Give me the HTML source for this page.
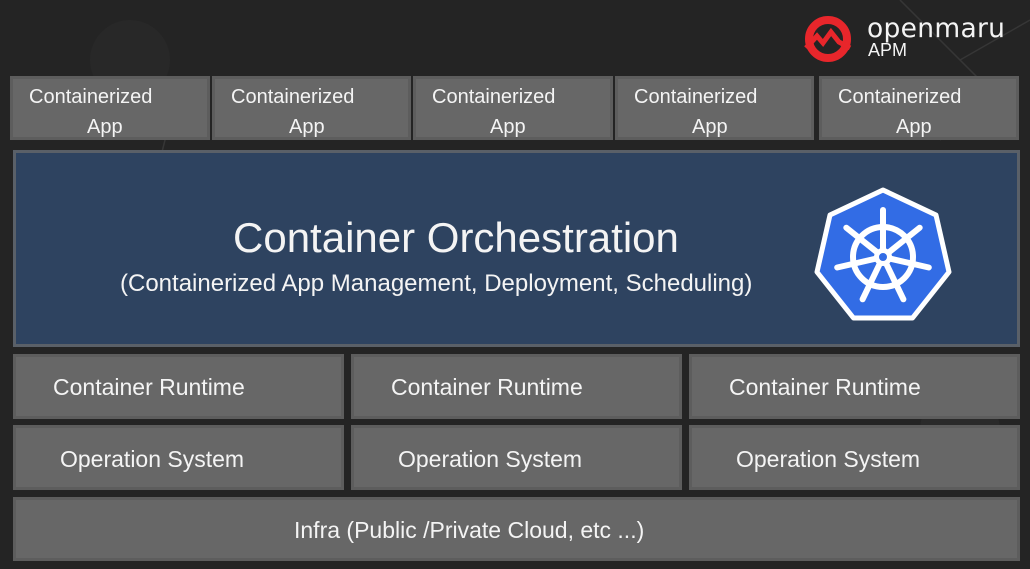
<!DOCTYPE html>
<html><head><meta charset="utf-8"><style>
body{margin:0;width:1030px;height:569px;background:#242424;overflow:hidden;position:relative;font-family:"Liberation Sans","DejaVu Sans",sans-serif;color:#f4f4f4}
.b{position:absolute;background:#676767;border:3px solid #5d5d5d;box-sizing:border-box}
.t{position:absolute;white-space:nowrap}
.app{font-size:20px;line-height:30px}
.r{font-size:23px}
</style></head><body>
<svg style="position:absolute;left:0;top:0" width="1030" height="569">
<g stroke="#363636" stroke-width="1.5" fill="none">
<line x1="40" y1="190" x2="120" y2="320"/><line x1="120" y1="320" x2="170" y2="120"/>
<line x1="900" y1="0" x2="1000" y2="100"/><line x1="960" y1="60" x2="1030" y2="20"/>
<line x1="1000" y1="100" x2="940" y2="140"/>
</g>
<circle cx="130" cy="60" r="40" fill="#282828"/><circle cx="960" cy="430" r="40" fill="#2a2a2a"/>
</svg>
<svg style="position:absolute;left:803px;top:14px" width="50" height="50" viewBox="0 0 50 50">
<circle cx="25" cy="25" r="19" fill="none" stroke="#e8262b" stroke-width="8"/>
<path d="M3 34 L14 22 L20 29 L28 18 L36 28 L47 34" fill="none" stroke="#e8262b" stroke-width="5" stroke-linejoin="miter"/>
<path d="M12 30 L20 36 L28 27 L37 34" fill="none" stroke="#242424" stroke-width="2"/>
</svg>
<div class="t" style="left:867px;top:13px;font-size:26.5px;letter-spacing:0.3px;color:#f4f4f4;font-family:'DejaVu Sans',sans-serif">openmaru</div>
<div class="t" style="left:868px;top:40px;font-size:18px">APM</div>

<div class="b" style="left:10px;top:76px;width:200px;height:64px"></div>
<div class="b" style="left:212px;top:76px;width:199px;height:64px"></div>
<div class="b" style="left:413px;top:76px;width:200px;height:64px"></div>
<div class="b" style="left:615px;top:76px;width:199px;height:64px"></div>
<div class="b" style="left:819px;top:76px;width:200px;height:64px"></div>
<div class="t app" style="left:29px;top:82px">Containerized</div><div class="t app" style="left:87px;top:112px">App</div>
<div class="t app" style="left:231px;top:82px">Containerized</div><div class="t app" style="left:289px;top:112px">App</div>
<div class="t app" style="left:432px;top:82px">Containerized</div><div class="t app" style="left:490px;top:112px">App</div>
<div class="t app" style="left:634px;top:82px">Containerized</div><div class="t app" style="left:692px;top:112px">App</div>
<div class="t app" style="left:838px;top:82px">Containerized</div><div class="t app" style="left:896px;top:112px">App</div>

<div class="b" style="left:13px;top:150px;width:1007px;height:197px;background:#2e4360;border-color:#5a6068"></div>
<div class="t" style="left:233px;top:214px;font-size:42px">Container Orchestration</div>
<div class="t" style="left:120px;top:270px;font-size:24px">(Containerized App Management, Deployment, Scheduling)</div>
<svg style="position:absolute;left:811px;top:185px" width="144" height="144" viewBox="-72 -72 144 144">
<polygon points="0,-67 53,-42 66,15 29.5,61 -29.5,61 -66,15 -53,-42" fill="#326ce5" stroke="#fff" stroke-width="5" stroke-linejoin="round"/>
<g stroke="#fff" stroke-width="6" stroke-linecap="round" fill="none">
<circle cx="0" cy="0" r="30"/>
<line x1="0" y1="0" x2="0" y2="-47"/>
<line x1="0" y1="0" x2="36.7" y2="-29.3"/>
<line x1="0" y1="0" x2="45.8" y2="10.5"/>
<line x1="0" y1="0" x2="20.4" y2="42.3"/>
<line x1="0" y1="0" x2="-20.4" y2="42.3"/>
<line x1="0" y1="0" x2="-45.8" y2="10.5"/>
<line x1="0" y1="0" x2="-36.7" y2="-29.3"/>
</g>
<circle cx="0" cy="0" r="9" fill="#fff"/><circle cx="0" cy="0" r="4" fill="#326ce5"/>
</svg>

<div class="b" style="left:13px;top:354px;width:331px;height:65px"></div>
<div class="b" style="left:351px;top:354px;width:331px;height:65px"></div>
<div class="b" style="left:689px;top:354px;width:331px;height:65px"></div>
<div class="t r" style="left:53px;top:374px">Container Runtime</div>
<div class="t r" style="left:391px;top:374px">Container Runtime</div>
<div class="t r" style="left:729px;top:374px">Container Runtime</div>

<div class="b" style="left:13px;top:425px;width:331px;height:65px"></div>
<div class="b" style="left:351px;top:425px;width:331px;height:65px"></div>
<div class="b" style="left:689px;top:425px;width:331px;height:65px"></div>
<div class="t r" style="left:60px;top:446px">Operation System</div>
<div class="t r" style="left:398px;top:446px">Operation System</div>
<div class="t r" style="left:736px;top:446px">Operation System</div>

<div class="b" style="left:13px;top:497px;width:1007px;height:64px"></div>
<div class="t r" style="left:294px;top:517px">Infra (Public /Private Cloud, etc ...)</div>
</body></html>
